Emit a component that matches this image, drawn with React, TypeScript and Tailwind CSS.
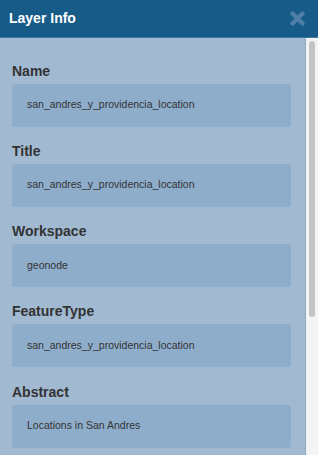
const fields = [
  { label: 'Name', value: 'san_andres_y_providencia_location' },
  { label: 'Title', value: 'san_andres_y_providencia_location' },
  { label: 'Workspace', value: 'geonode' },
  { label: 'FeatureType', value: 'san_andres_y_providencia_location' },
  { label: 'Abstract', value: 'Locations in San Andres' },
]

export default function App() {
  return (
    <div className="w-[318px] h-[455px] overflow-hidden flex flex-col font-['Liberation_Sans',Arial,sans-serif] text-[#333]">
      {/* header */}
      <div className="h-[38px] shrink-0 bg-[#175b89] border-b border-[#3f7aa3] flex items-center justify-between pl-[9px] pr-[13px]">
        <span className="text-white font-bold text-[14px]">Layer Info</span>
        <svg width="15" height="15" viewBox="0 0 15 15">
          <path d="M2.5 2.5 L12.5 12.5 M12.5 2.5 L2.5 12.5" stroke="#4e80a7" strokeWidth="4.2" strokeLinecap="round" />
        </svg>
      </div>

      <div className="flex flex-1 min-h-0">
        {/* content */}
        <div className="w-[306px] bg-[#a1bad2] border-r border-[#8fa9c2] pl-[12px] pr-[14px] pt-[22.5px]">
          {fields.map(f => (
            <div key={f.label} className="mb-[14.25px]">
              <div className="text-[14px] font-bold leading-[20px] mb-[3px]">{f.label}</div>
              <div className="h-[43px] bg-[#8eadcb] rounded-[3px] flex items-center pl-[15px] text-[10.5px]">
                {f.value}
              </div>
            </div>
          ))}
        </div>

        {/* scrollbar */}
        <div className="flex-1 bg-[#f4f4f4] pt-[3px] pl-[3px]">
          <div className="w-[6px] h-[276px] rounded-[3px] bg-[#c3c3c3]" />
        </div>
      </div>
    </div>
  )
}
